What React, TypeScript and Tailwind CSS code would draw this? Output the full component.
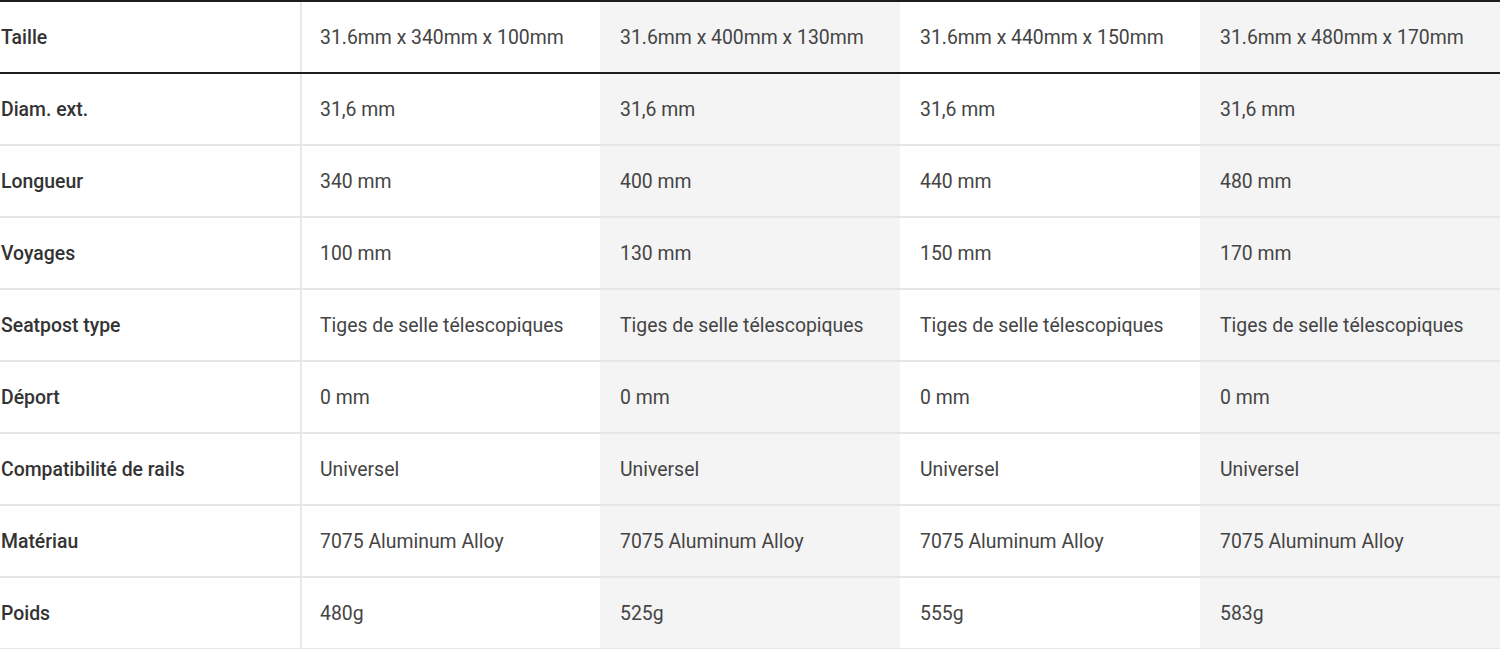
import React from 'react';

const sizes = [
    { taille: '31.6mm x 340mm x 100mm', longueur: '340 mm', voyage: '100 mm', poids: '480g' },
    { taille: '31.6mm x 400mm x 130mm', longueur: '400 mm', voyage: '130 mm', poids: '525g' },
    { taille: '31.6mm x 440mm x 150mm', longueur: '440 mm', voyage: '150 mm', poids: '555g' },
    { taille: '31.6mm x 480mm x 170mm', longueur: '480 mm', voyage: '170 mm', poids: '583g' },
];

const rows: { label: string; values: string[] }[] = [
    { label: 'Diam. ext.', values: sizes.map(() => '31,6 mm') },
    { label: 'Longueur', values: sizes.map((s) => s.longueur) },
    { label: 'Voyages', values: sizes.map((s) => s.voyage) },
    { label: 'Seatpost type', values: sizes.map(() => 'Tiges de selle télescopiques') },
    { label: 'Déport', values: sizes.map(() => '0 mm') },
    { label: 'Compatibilité de rails', values: sizes.map(() => 'Universel') },
    { label: 'Matériau', values: sizes.map(() => '7075 Aluminum Alloy') },
    { label: 'Poids', values: sizes.map((s) => s.poids) },
];

const cellBg = ['bg-white', 'bg-[#f4f4f4]', 'bg-white', 'bg-[#f4f4f4]'];
const cellWidth = ['w-[298px] pl-[18px]', 'w-[300px] pl-5', 'w-[300px] pl-5', 'w-[300px] pl-5'];

const Row: React.FC<{ label: string; values: string[]; header?: boolean }> = ({ label, values, header }) => (
    <div
        className={
            header
                ? 'flex border-t-2 border-b-2 border-[#1e1e1e]'
                : 'flex border-b-2 border-[#e6e6e6]'
        }
    >
        <div className="h-[70px] w-[302px] shrink-0 flex items-center pt-[2px] pl-px border-r-2 border-[#e8e8e8] bg-white font-medium text-[#333]">
            {label}
        </div>
        {values.map((v, i) => (
            <div key={i} className={`${cellBg[i]} ${cellWidth[i]} shrink-0 flex items-center pt-[2px] text-[#444]`}>
                {v}
            </div>
        ))}
    </div>
);

export default function App() {
    return (
        <div className="w-[1500px] h-[649px] overflow-hidden bg-white text-[19.4px]" style={{ fontFamily: 'Roboto, "Liberation Sans", sans-serif' }}>
            <Row header label="Taille" values={sizes.map((s) => s.taille)} />
            {rows.map((r) => (
                <Row key={r.label} label={r.label} values={r.values} />
            ))}
        </div>
    );
}
